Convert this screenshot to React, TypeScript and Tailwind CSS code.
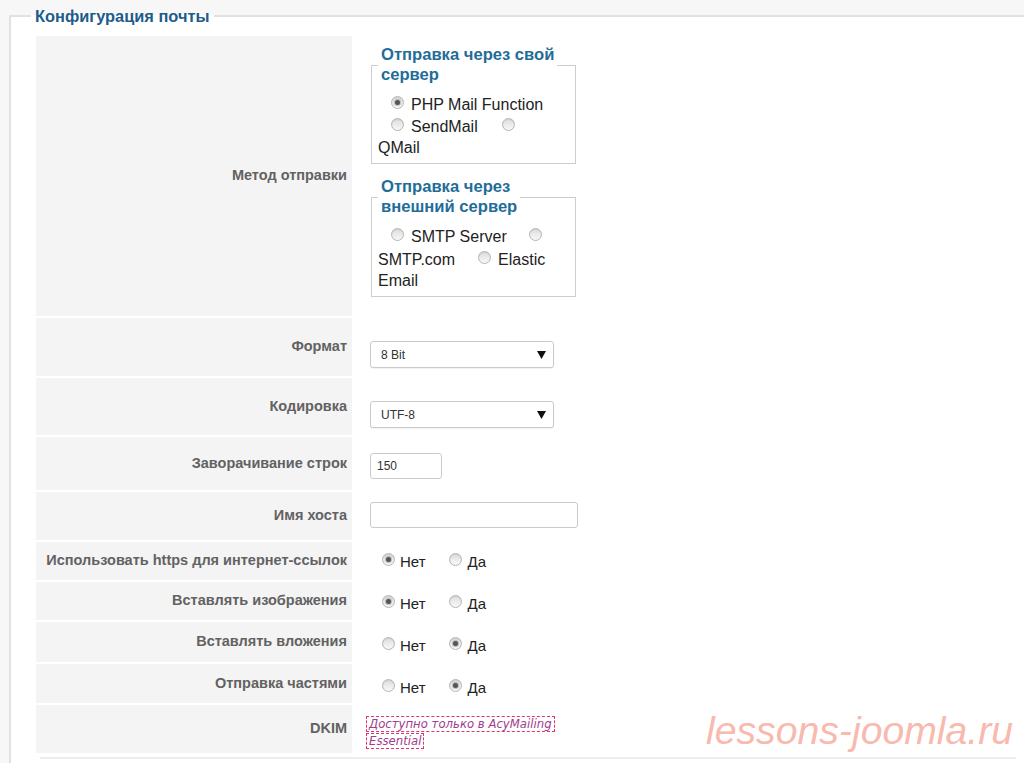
import React from "react";

const sans = "font-['Liberation_Sans',Arial,sans-serif]";

function Radio({ checked = false }: { checked?: boolean }) {
  return (
    <span className="inline-flex items-center justify-center w-[13px] h-[13px] shrink-0 mb-[5px] rounded-full border border-[#b5b5b5] bg-linear-to-b from-[#dedede] to-[#f8f8f8] shadow-[inset_0_1px_1px_rgba(0,0,0,0.08)]">
      {checked && <span className="w-[5px] h-[5px] rounded-full bg-[#555] shadow-[0_0_1px_1px_rgba(90,90,90,0.35)]" />}
    </span>
  );
}

function Select({ value }: { value: string }) {
  return (
    <div className="w-[184px] h-[27px] flex items-center justify-between pl-[10px] pr-[7px] border border-[#cacaca] rounded-[3px] bg-white shadow-[0_1px_1px_rgba(0,0,0,0.06)] text-[12px] text-[#333]">
      <span>{value}</span>
      <svg width="9" height="8" viewBox="0 0 9 8">
        <path d="M0 0 H9 L4.5 8 Z" fill="#111" />
      </svg>
    </div>
  );
}

function Row({
  label,
  height,
  valueClass,
  children,
}: {
  label: string;
  height: string;
  valueClass: string;
  children: React.ReactNode;
}) {
  return (
    <div className={`flex ${height}`}>
      <div className="w-[316px] shrink-0 flex items-center justify-end pr-[5px] bg-[#f4f4f4] text-[14.5px] font-bold text-[#626262]">
        {label}
      </div>
      <div className={`flex-1 ${valueClass}`}>{children}</div>
    </div>
  );
}

function YesNo({ yes }: { yes: boolean }) {
  return (
    <div className="flex items-center h-[20px] text-[15px] text-[#222]">
      <Radio checked={!yes} />
      <span className="ml-[5px]">Нет</span>
      <span className="w-[23px]" />
      <Radio checked={yes} />
      <span className="ml-[6px]">Да</span>
    </div>
  );
}

function MethodGroup({
  title,
  children,
  className,
}: {
  title: React.ReactNode;
  children: React.ReactNode;
  className: string;
}) {
  return (
    <fieldset className={`w-[205px] ml-[1px] px-[6px] pt-[9px] pb-[5px] border border-[#cdcdcd] ${className}`}>
      <legend className="px-[3px] text-[16.6px] leading-[20px] font-bold text-[#1f6d98]">{title}</legend>
      <div className="text-[16px] text-[#222]">{children}</div>
    </fieldset>
  );
}

export default function App() {
  return (
    <div className={`relative w-[1024px] h-[763px] overflow-hidden bg-[#f7f7f7] ${sans}`}>
      <fieldset className="mt-[6px] ml-[9px] w-[1040px] pl-[25px] pt-[10px] pb-[6px] border-2 border-[#e1e1e1] bg-white">
        <legend className="-ml-[5px] px-[4px] text-[16.4px] leading-[20px] font-bold text-[#215b8a]">
          Конфигурация почты
        </legend>

        <div className="flex flex-col gap-[2px] w-[980px]">
          <Row label="Метод отправки" height="h-[280px]" valueClass="pl-[18px] pt-[9px]">
            <MethodGroup title={<>Отправка через свой<br />сервер</>} className="">
              <div className="flex items-center h-[21px]">
                <span className="ml-[13px]" />
                <Radio checked />
                <span className="ml-[7px]">PHP Mail Function</span>
              </div>
              <div className="flex items-center h-[23px]">
                <span className="ml-[13px]" />
                <Radio />
                <span className="ml-[7px]">SendMail</span>
                <span className="w-[24px]" />
                <Radio />
              </div>
              <div className="flex items-center h-[20px]">QMail</div>
            </MethodGroup>

            <MethodGroup title={<>Отправка через<br />внешний сервер</>} className="mt-[13px]">
              <div className="flex items-center h-[22px]">
                <span className="ml-[13px]" />
                <Radio />
                <span className="ml-[7px]">SMTP Server</span>
                <span className="w-[22px]" />
                <Radio />
              </div>
              <div className="flex items-center h-[23px]">
                <span>SMTP.com</span>
                <span className="w-[23px]" />
                <Radio />
                <span className="ml-[7px]">Elastic</span>
              </div>
              <div className="flex items-center h-[20px]">Email</div>
            </MethodGroup>
          </Row>

          <Row label="Формат" height="h-[58px]" valueClass="pl-[18px] pt-[23px]">
            <Select value="8 Bit" />
          </Row>

          <Row label="Кодировка" height="h-[57px]" valueClass="pl-[18px] pt-[23px]">
            <Select value="UTF-8" />
          </Row>

          <Row label="Заворачивание строк" height="h-[53px]" valueClass="pl-[18px] pt-[16px]">
            <div className="w-[72px] h-[26px] flex items-center pl-[6px] border border-[#cacaca] rounded-[3px] text-[12px] text-[#333]">
              150
            </div>
          </Row>

          <Row label="Имя хоста" height="h-[48px]" valueClass="pl-[18px] pt-[10px]">
            <div className="w-[208px] h-[26px] border border-[#cacaca] rounded-[3px]" />
          </Row>

          <Row label="Использовать https для интернет-ссылок" height="h-[38px]" valueClass="pt-[10px] pl-[30px]">
            <YesNo yes={false} />
          </Row>

          <Row label="Вставлять изображения" height="h-[38px]" valueClass="pt-[12px] pl-[30px]">
            <YesNo yes={false} />
          </Row>

          <Row label="Вставлять вложения" height="h-[40px]" valueClass="pt-[14px] pl-[30px]">
            <YesNo yes />
          </Row>

          <Row label="Отправка частями" height="h-[39px]" valueClass="pt-[14px] pl-[30px]">
            <YesNo yes />
          </Row>

          <Row label="DKIM" height="h-[48px]" valueClass="pt-[11px] pl-[14px]">
            <div className="font-['DejaVu_Sans',Verdana,sans-serif] text-[11.7px] leading-[17px] italic text-[#a23c8e]">
              <span className="px-[2px] border border-dashed border-[#e2336b] box-decoration-clone">
                Доступно только в AcyMailing
                <br />
                Essential
              </span>
            </div>
          </Row>
        </div>
        <div className="mt-[4px] ml-[4px] w-[976px] h-[2px] bg-[#eeeeee]" />
      </fieldset>

      <div className="absolute left-[706px] top-[702px] text-[39.2px] italic text-[#f8b9af]">
        lessons-joomla.ru
      </div>
    </div>
  );
}
